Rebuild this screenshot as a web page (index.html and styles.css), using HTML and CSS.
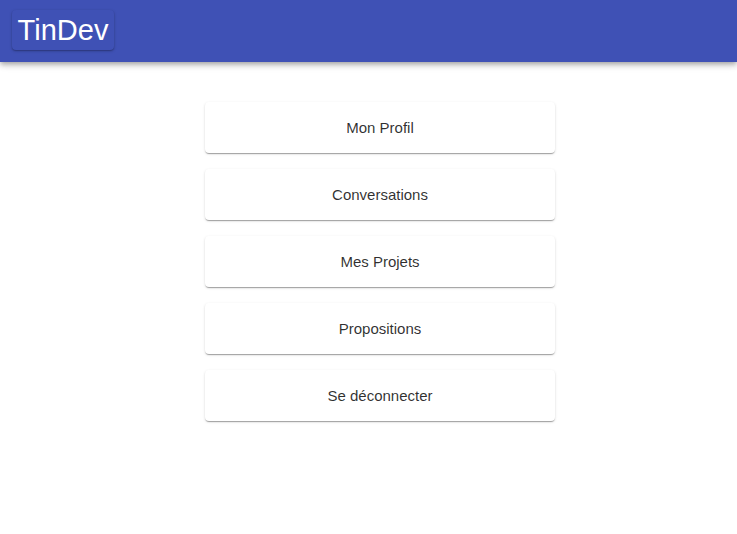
FILE: index.html
```html
<!DOCTYPE html>
<html>
<head>
<meta charset="utf-8">
<link rel="stylesheet" href="styles.css">
</head>
<body>
<header class="appbar">
  <div class="brand">TinDev</div>
</header>
<main class="menu">
  <div class="card">Mon Profil</div>
  <div class="card">Conversations</div>
  <div class="card">Mes Projets</div>
  <div class="card">Propositions</div>
  <div class="card">Se déconnecter</div>
</main>
</body>
</html>
```
FILE: styles.css
```css
html, body { margin: 0; padding: 0; background: #fff; }
body { font-family: "Liberation Sans", Arial, sans-serif; }
.appbar {
  height: 62px;
  background: #3f51b5;
  box-shadow: 0 2px 4px -1px rgba(0,0,0,0.2), 0 4px 5px 0 rgba(0,0,0,0.14), 0 1px 10px 0 rgba(0,0,0,0.12);
  display: flex;
  align-items: flex-start;
  padding: 10px 12px 0;
  box-sizing: border-box;
}
.brand {
  width: 102px;
  height: 40px;
  box-sizing: border-box;
  border-radius: 4px;
  background: #3f51b5;
  box-shadow: 0 1px 3px 0 rgba(0,0,0,0.25), 0 1px 1px 0 rgba(0,0,0,0.14);
  color: #fff;
  font-size: 29px;
  line-height: 40px;
  text-align: center;
}
.menu {
  display: flex;
  flex-direction: column;
  align-items: center;
  gap: 16px;
  padding: 40px 0 20px 23px;
}
.card {
  width: 350px;
  height: 51px;
  border-radius: 4px;
  background: #fff;
  box-shadow: 0 2px 1px -1px rgba(0,0,0,0.2), 0 1px 1px 0 rgba(0,0,0,0.14), 0 1px 3px 0 rgba(0,0,0,0.12);
  display: flex;
  align-items: center;
  justify-content: center;
  font-size: 15px;
  color: rgba(0,0,0,0.82);
}
```
